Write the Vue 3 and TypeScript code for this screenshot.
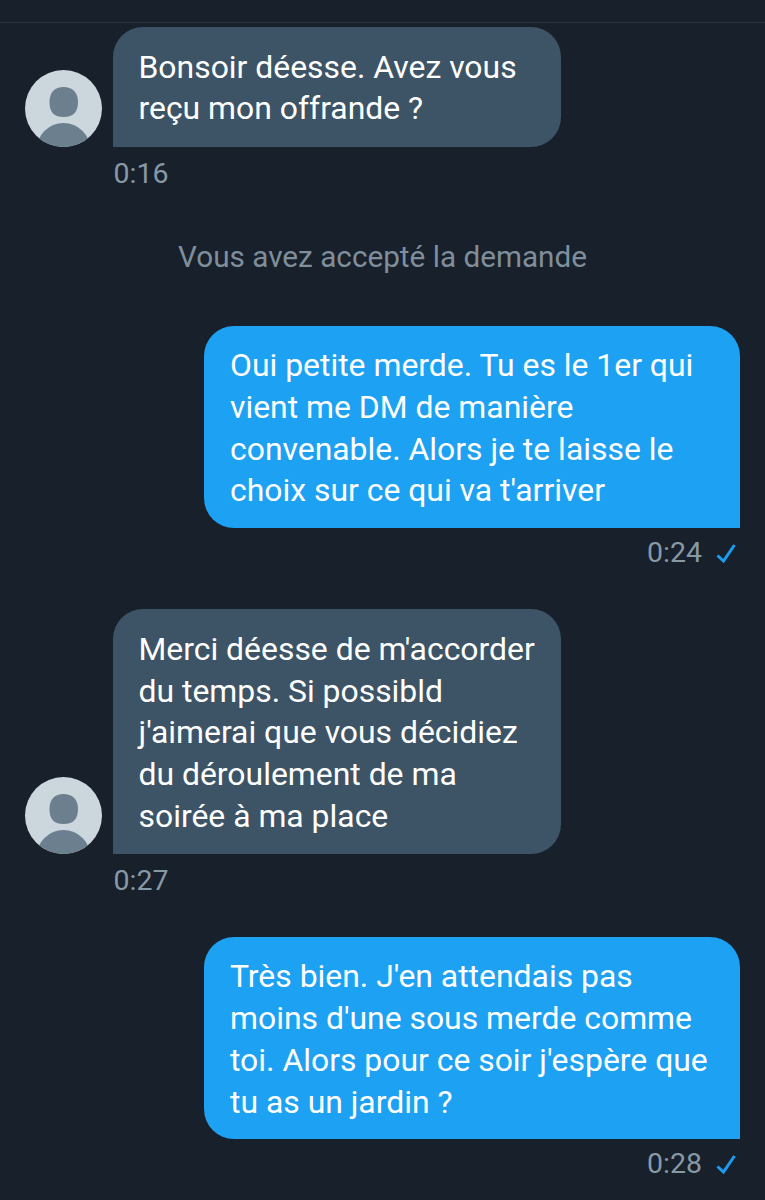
<script setup lang="ts">
const check = 'M1.5 12.5 L7.5 18 L18.5 2'
const head = 'M38.5 17 C47 17 53 22 53 32 C53 41 49 47 38.5 47 C28 47 24.5 41 24.5 32 C24.5 22 30 17 38.5 17 Z'
</script>
<template>
  <main class="page">
    <div class="topline"></div>
    <section class="row in first">
      <div class="avatar"><svg viewBox="0 0 77 77" width="77" height="77"><path :d="head" fill="#6c7f8f"/><ellipse cx="38.5" cy="80" rx="27" ry="27" fill="#6c7f8f"/></svg></div>
      <div class="bubble in-b">Bonsoir déesse. Avez vous<br>reçu mon offrande ?</div>
    </section>
    <div class="time in-t">0:16</div>
    <div class="notice">Vous avez accepté la demande</div>
    <section class="out b1"><div class="bubble out-b">Oui petite merde. Tu es le 1er qui<br>vient me DM de manière<br>convenable. Alors je te laisse le<br>choix sur ce qui va t'arriver</div></section>
    <div class="time out-t"><span>0:24</span><svg viewBox="0 0 20 20" width="20" height="20"><path :d="check" fill="none" stroke="#1d9bf0" stroke-width="3"/></svg></div>
    <section class="row in second">
      <div class="avatar"><svg viewBox="0 0 77 77" width="77" height="77"><path :d="head" fill="#6c7f8f"/><ellipse cx="38.5" cy="80" rx="27" ry="27" fill="#6c7f8f"/></svg></div>
      <div class="bubble in-b">Merci déesse de m'accorder<br>du temps. Si possibld<br>j'aimerai que vous décidiez<br>du déroulement de ma<br>soirée à ma place</div>
    </section>
    <div class="time in-t">0:27</div>
    <section class="out b2"><div class="bubble out-b">Très bien. J'en attendais pas<br>moins d'une sous merde comme<br>toi. Alors pour ce soir j'espère que<br>tu as un jardin ?</div></section>
    <div class="time out-t"><span>0:28</span><svg viewBox="0 0 20 20" width="20" height="20"><path :d="check" fill="none" stroke="#1d9bf0" stroke-width="3"/></svg></div>
  </main>
</template>
<style scoped>
.page { width: 765px; height: 1200px; background: #17202b; overflow: hidden; font-family: Roboto, "Noto Sans", sans-serif; color: #fff; box-sizing: border-box; padding-top: 22px; }
.topline { height: 1px; background: #263340; margin-bottom: 4px; }
.row { display: flex; align-items: flex-end; padding-left: 25px; gap: 11px; }
.avatar { width: 77px; height: 77px; border-radius: 50%; background: #ccd6dd; overflow: hidden; flex: none; }
.avatar svg { display: block; }
.bubble { font-size: 31.9px; line-height: 41.8px; box-sizing: border-box; white-space: nowrap; }
.in-b { width: 448px; background: #3d5466; padding: 19.5px 26px 16.5px 25.5px; border-radius: 30px 30px 30px 0; }
.out { display: flex; justify-content: flex-end; padding-right: 25px; }
.out-b { width: 536px; background: #1da1f2; padding: 19px 26px 16px; border-radius: 30px 30px 0 30px; }
.time { font-size: 28.5px; line-height: 34px; color: #8899a6; }
.in-t { padding: 10px 0 0 113.5px; }
.out-t { display: flex; justify-content: flex-end; align-items: center; gap: 14px; padding: 8px 29px 0 0; }
.notice { text-align: center; font-size: 29.7px; line-height: 34px; color: #7f8e9b; margin-top: 49.5px; }
.b1 { margin-top: 52px; }
.second { margin-top: 39px; }
.b2 { margin-top: 39px; }
</style>
<style>
body { background: #17202b; }
</style>
